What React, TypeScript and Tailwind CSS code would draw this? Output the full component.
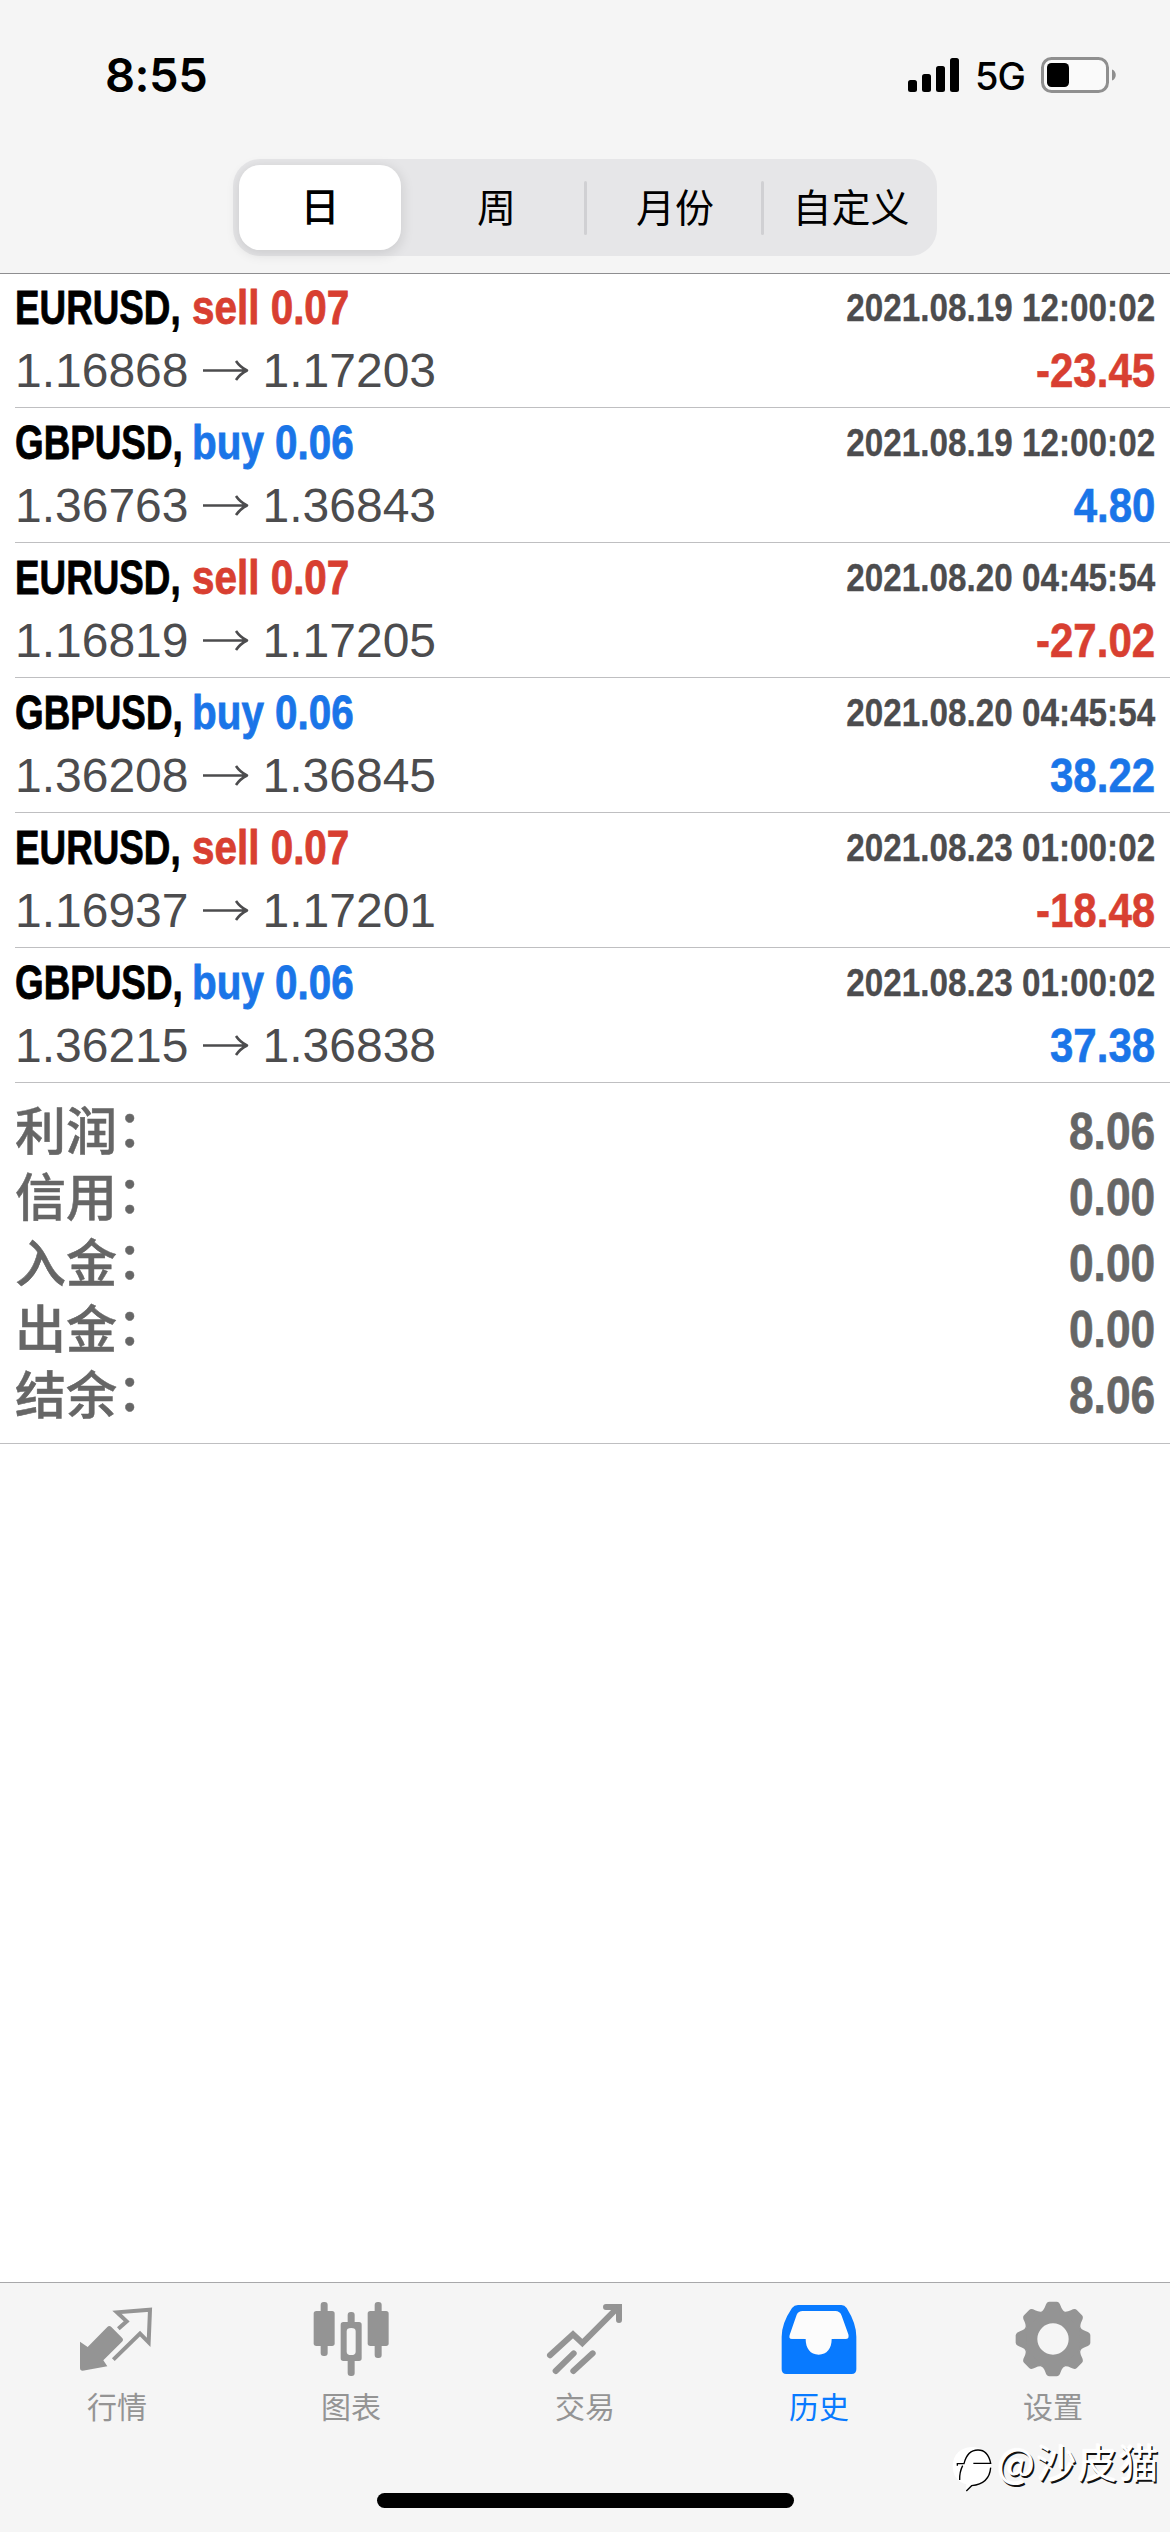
import React from 'react';

interface Deal {
  symbol: string;
  side: 'sell' | 'buy';
  volume: string;
  open: string;
  close: string;
  time: string;
  profit: string;
}

const deals: Deal[] = [
  { symbol: 'EURUSD', side: 'sell', volume: '0.07', open: '1.16868', close: '1.17203', time: '2021.08.19 12:00:02', profit: '-23.45' },
  { symbol: 'GBPUSD', side: 'buy', volume: '0.06', open: '1.36763', close: '1.36843', time: '2021.08.19 12:00:02', profit: '4.80' },
  { symbol: 'EURUSD', side: 'sell', volume: '0.07', open: '1.16819', close: '1.17205', time: '2021.08.20 04:45:54', profit: '-27.02' },
  { symbol: 'GBPUSD', side: 'buy', volume: '0.06', open: '1.36208', close: '1.36845', time: '2021.08.20 04:45:54', profit: '38.22' },
  { symbol: 'EURUSD', side: 'sell', volume: '0.07', open: '1.16937', close: '1.17201', time: '2021.08.23 01:00:02', profit: '-18.48' },
  { symbol: 'GBPUSD', side: 'buy', volume: '0.06', open: '1.36215', close: '1.36838', time: '2021.08.23 01:00:02', profit: '37.38' },
];

const summary = [
  { label: '利润', value: '8.06' },
  { label: '信用', value: '0.00' },
  { label: '入金', value: '0.00' },
  { label: '出金', value: '0.00' },
  { label: '结余', value: '8.06' },
];

function StatusBar() {
  return (
    <div className="flex h-[150px] items-start justify-between pl-[105px] pr-[54px] pt-[45px]">
      <span className="font-['Inter'] text-[47px] font-semibold leading-[60px] tracking-[-0.5px]">8:55</span>
      <div className="flex h-[60px] items-center">
        <svg className="h-[34px] w-[51px]" viewBox="0 0 51 34">
          <rect x="0" y="22" width="9" height="12" rx="2.5" />
          <rect x="14" y="16" width="9" height="18" rx="2.5" />
          <rect x="28" y="8" width="9" height="26" rx="2.5" />
          <rect x="42" y="0" width="9" height="34" rx="2.5" />
        </svg>
        <span className="ml-[16px] w-[66px] pt-[2px] font-['Inter'] text-[38px] font-medium leading-[60px] tracking-[-1px]">5G</span>
        <svg className="h-[36px] w-[75px]" viewBox="0 0 75 36">
          <rect x="1.5" y="1.5" width="65" height="33" rx="9" fill="#fafafa" stroke="#8f8f8f" strokeWidth="3" />
          <rect x="6" y="6" width="22" height="24" rx="4.5" />
          <path d="M71 12.5c5 1.5 5 9.500 0 11z" fill="#8f8f8f" />
        </svg>
      </div>
    </div>
  );
}

function PeriodTabs() {
  return (
    <div className="mx-auto mt-[9px] flex h-[97px] w-[704px] items-center rounded-[27px] bg-[#e6e6e8] p-[6px] font-['Noto_Sans_CJK_SC',sans-serif] text-[39px] leading-[54px]">
      <div className="flex h-[85px] w-[162px] shrink-0 justify-center rounded-[21px] bg-white pt-[12px] font-medium shadow-[0_3px_12px_2px_rgba(0,0,0,0.1)]">
        日
      </div>
      <div className="ml-[8px] w-[175px] shrink-0 pb-[6px] text-center">周</div>
      <div className="h-[54px] w-[3px] shrink-0 rounded-full bg-[#d0d0d3]" />
      <div className="w-[174px] shrink-0 pb-[6px] pl-[2px] text-center">月份</div>
      <div className="h-[54px] w-[3px] shrink-0 rounded-full bg-[#d0d0d3]" />
      <div className="-mr-[7px] w-[174px] shrink-0 whitespace-nowrap pb-[6px] text-center">自定义</div>
    </div>
  );
}

function DealRow({ deal }: { deal: Deal }) {
  const tone = deal.side === 'sell' ? 'text-[#d83f31]' : 'text-[#1a75e8]';

  return (
    <li className="ml-[15px] h-[135px] border-b border-[#bfbfc1] pr-[15px] pt-[3px]">
      <div className="flex whitespace-nowrap font-bold leading-[63px] [-webkit-text-stroke:0.8px]">
        <span className="w-[177px] text-[48px]">
          <span className="block origin-left scale-x-[0.767]">{deal.symbol},</span>
        </span>
        <span className={`origin-left scale-x-[0.842] text-[48px] ${tone}`}>{deal.side} {deal.volume}</span>
        <span className="ml-auto origin-right scale-x-[0.853] text-[39px] text-[#4c4c4e] [-webkit-text-stroke:0.3px]">{deal.time}</span>
      </div>
      <div className="flex justify-between text-[48px] leading-[63px]">
        <span className="flex text-[#4c4c4e]">
          {deal.open}
          <svg className="mx-[13px] h-[63px] w-[48px]" viewBox="0 0 48 63" fill="none" stroke="currentColor" strokeWidth="2.600">
            <path d="M1 31.500h44M34 22q4 6 11 9.500-7 3.500-11 9.500" strokeLinejoin="round" />
          </svg>
          {deal.close}
        </span>
        <span className={`origin-right scale-x-[0.875] font-bold [-webkit-text-stroke:0.6px] ${tone}`}>{deal.profit}</span>
      </div>
    </li>
  );
}

function QuotesIcon() {
  return (
    <svg className="h-[78px] w-[78px]" viewBox="234 120 234 234">
      <path d="M240 245l23 16 59-60q6-6 12 0l32 32q6 6 0 12l-56 56 12 18-74 13q-8 0-8-8z" fill="currentColor" />
      <path d="M355 206l25-22-29-27 99-8-4 98-26-26-80 78" fill="none" stroke="currentColor" strokeWidth="12" />
    </svg>
  );
}

function ChartIcon() {
  return (
    <svg className="h-[78px] w-[78px]" viewBox="934 120 234 234" fill="currentColor">
      <rect x="960" y="126" width="21" height="162" rx="9" />
      <rect x="939" y="153" width="63" height="105" rx="8" />
      <rect x="1122" y="126" width="21" height="168" rx="9" />
      <rect x="1101" y="153" width="63" height="105" rx="8" />
      <rect x="1041" y="156" width="21" height="40" rx="9" />
      <rect x="1041" y="290" width="21" height="58" rx="9" />
      <path fillRule="evenodd" d="M1028 186h47q8 0 8 8v101q0 8-8 8h-47q-8 0-8-8V194q0-8 8-8zM1038 214v61q0 10 13.500 10t13.500-10v-61q0-10-13.500-10t-13.500 10z" />
    </svg>
  );
}

function TradeIcon() {
  return (
    <svg className="h-[78px] w-[78px]" viewBox="288 120 234 234" fill="none" stroke="currentColor" strokeWidth="18" strokeLinecap="round">
      <path d="M300 286l69-63 28 26 106-106" />
      <path d="M468 141h39v39" />
      <path d="M317 333l54-53M370 333l58-53" />
      <path d="M490 132h25v26z" fill="currentColor" stroke="none" />
    </svg>
  );
}

function HistoryIcon() {
  return (
    <svg className="h-[78px] w-[78px]" viewBox="988 120 234 234">
      <path d="M1050 145h115l40 90h-200z" fill="#fcfcfc" />
      <path d="M1060 230h90v60h-90z" fill="#fcfcfc" />
      <path
        fill="currentColor"
        fillRule="evenodd"
        d="M1042 135h130q10 0 16 9 29 46 29 86v98q0 14-14 14h-196q-14 0-14-14v-98q0-40 31-86 7-9 18-9zM1056 153q-13 0-18 11l-20 58q-6 15 6 15h41c0 28 14 47 39 47s39-19 39-47h42q12 0 8-14l-20-56q-5-14-19-14z"
      />
    </svg>
  );
}

const gearAngles = [0, 45, 90, 135, 180, 225, 270, 315];

function SettingsIcon() {
  return (
    <svg className="h-[78px] w-[78px]" viewBox="-117 -117 234 234" fill="currentColor">
      <circle r="67" fill="none" stroke="currentColor" strokeWidth="40" />
      {gearAngles.map((angle) => (
        <path key={angle} transform={`rotate(${angle})`} d="M-38-80q10-4 15-19 4-13 12-13h22q8 0 12 13 5 15 15 19z" />
      ))}
    </svg>
  );
}

const tabs = [
  { label: '行情', icon: <QuotesIcon /> },
  { label: '图表', icon: <ChartIcon /> },
  { label: '交易', icon: <TradeIcon /> },
  { label: '历史', icon: <HistoryIcon />, active: true },
  { label: '设置', icon: <SettingsIcon /> },
];

export default function App() {
  return (
    <div className="relative flex h-[2532px] w-[1170px] flex-col overflow-hidden bg-white font-['Liberation_Sans','Noto_Sans_CJK_SC',sans-serif] text-black">
      <header className="h-[274px] shrink-0 border-b border-[#8e8e90] bg-[#f5f5f5]">
        <StatusBar />
        <PeriodTabs />
      </header>

      <main className="-mt-px flex-1">
        <ul>
          {deals.map((deal, i) => (
            <DealRow key={i} deal={deal} />
          ))}
        </ul>
        <div className="h-[361px] border-b border-[#bfbfc1] px-[15px] pt-[15px] text-[51px] text-[#666]">
          {summary.map((item) => (
            <div key={item.label} className="flex h-[66px] justify-between">
              <span className="flex font-medium leading-[69px] [-webkit-text-stroke:0.5px]">
                {item.label}
                <span className="leading-[63px]">：</span>
              </span>
              <span className="origin-right scale-x-[0.87] font-bold leading-[67px] [-webkit-text-stroke:0.6px]">{item.value}</span>
            </div>
          ))}
        </div>
      </main>

      {/* 底部导航 */}
      <nav className="flex h-[250px] shrink-0 flex-col items-center border-t border-[#a8a8aa] bg-[#f5f5f5]">
        <div className="grid w-full grid-cols-5 pt-[17px]">
          {tabs.map((tab) => (
            <div key={tab.label} className={`flex flex-col items-center ${tab.active ? 'text-[#087aff]' : 'text-[#949494]'}`}>
              {tab.icon}
              <span className="mt-[5px] font-['Noto_Sans_CJK_SC',sans-serif] text-[30px] leading-[44px]">{tab.label}</span>
            </div>
          ))}
        </div>
        <div className="mb-[24px] mt-auto h-[15px] w-[417px] rounded-full bg-black" />
      </nav>

      {/* 水印 */}
      <div className="absolute bottom-[39px] right-[10px] flex items-start text-white">
        <svg className="h-[50px] w-[45px]" viewBox="60 40 135 150">
          <path d="M125 52a56 56 0 0 1 58 56q0 52-58 62l-18 16 2-22q-41-12-41-56 3-52 57-56z" fill="white" />
          <g fill="none" stroke="black" strokeWidth="4">
            <path d="M82 108v-6h20q10-41 42-41 30 0 38 40h-52" />
            <path d="M98 108q-10 20-9 43" />
            <path d="M182 114q-4 49-57 54l-16 16" />
          </g>
        </svg>
        <span className="ml-[2px] font-['Noto_Sans_CJK_SC',sans-serif] text-[40px] leading-[36px] tracking-[1.2px] [text-shadow:1.500px_1.500px_0_#111,-1px_-1px_1px_#fff]">@沙皮猫</span>
      </div>
    </div>
  );
}
